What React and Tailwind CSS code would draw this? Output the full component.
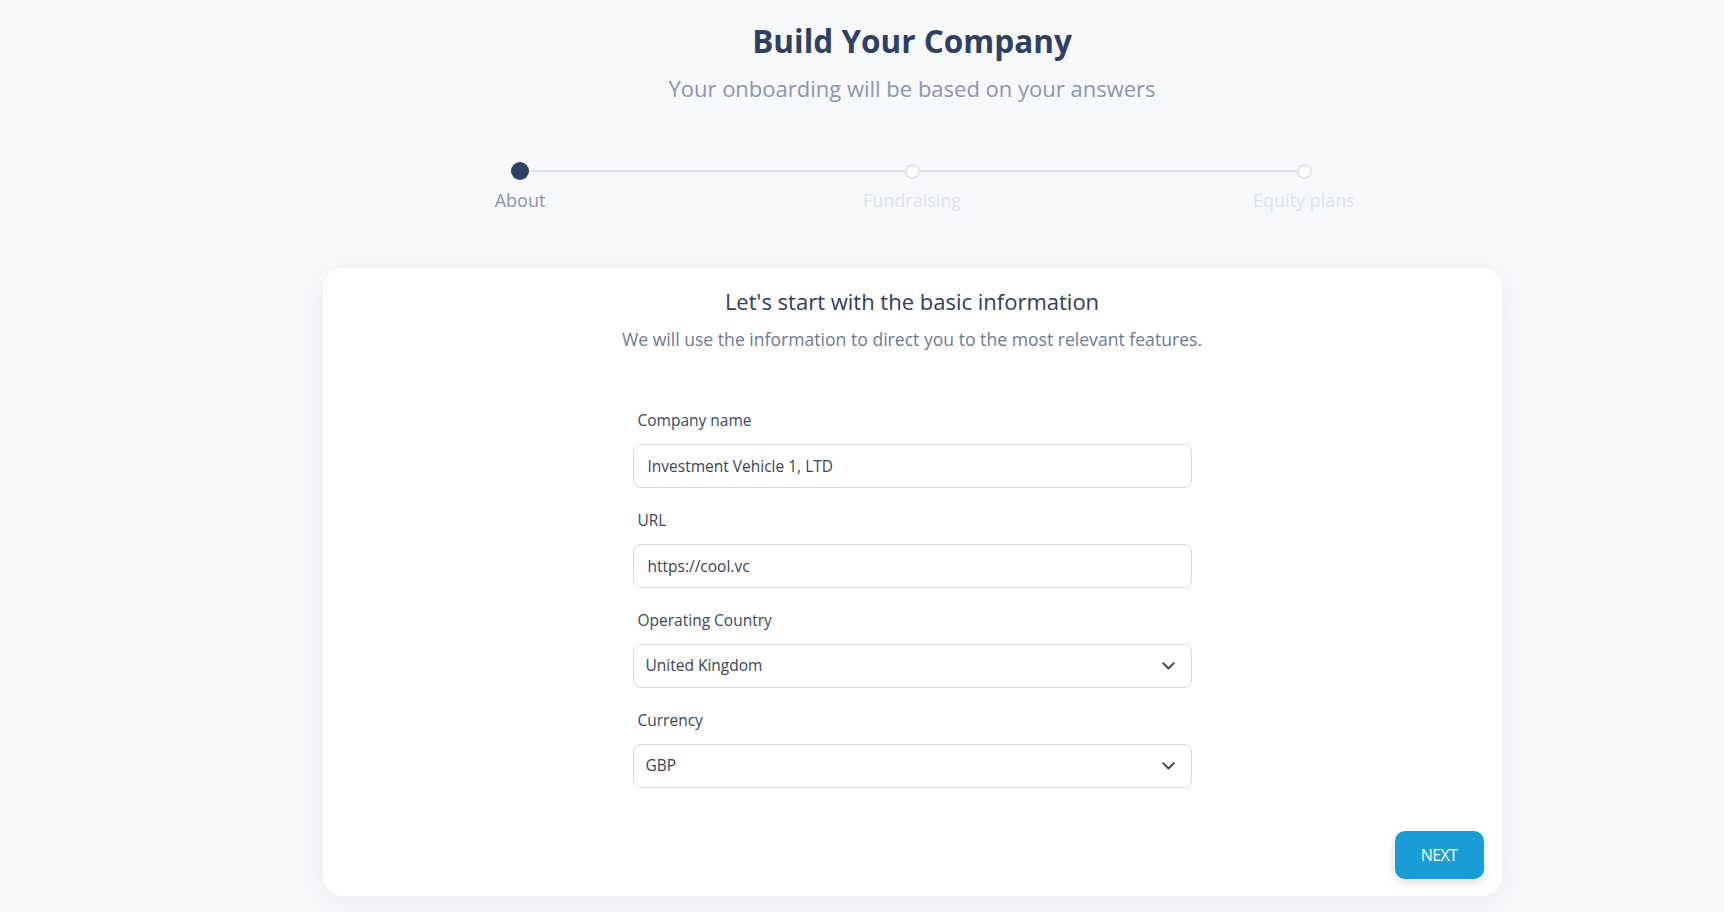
import React from "react";

const font = { fontFamily: '"Open Sans", "Noto Sans", sans-serif' };

function Step({ label, active, left, right }) {
  return (
    <div className="flex w-[392px] flex-col items-center">
      <div className="flex h-[18px] w-full items-center">
        <div className={"h-[2px] flex-1 " + (left ? "bg-[#e1e3e9]" : "bg-transparent")} />
        {active ? (
          <div className="h-[18px] w-[18px] rounded-full bg-[#2f4265]" />
        ) : (
          <div className="h-[15px] w-[15px] rounded-full border-2 border-[#e1e3e9] bg-white" />
        )}
        <div className={"h-[2px] flex-1 " + (right ? "bg-[#e1e3e9]" : "bg-transparent")} />
      </div>
      <div
        className={
          "mt-[6px] text-[18px] leading-[28px] " +
          (active ? "text-[#8796b1]" : "text-[#dfe3ea]")
        }
      >
        {label}
      </div>
    </div>
  );
}

function Chevron() {
  return (
    <svg width="13" height="8" viewBox="0 0 13 8" fill="none">
      <path d="M1.2 1.2l5.3 5.3 5.3-5.3" stroke="#3b3f4c" strokeWidth="1.8" strokeLinecap="round" strokeLinejoin="round" />
    </svg>
  );
}

function TextField({ label, value }) {
  return (
    <div className="flex flex-col">
      <div className="pl-[5px] text-[15.5px] leading-[24px] text-[#3a4862]">{label}</div>
      <input
        readOnly
        value={value}
        className="mt-3 h-[44px] w-full rounded-[8px] border border-[#d6d6dc] bg-white px-[14px] text-[15.5px] text-[#3b4356] outline-none"
        style={font}
      />
    </div>
  );
}

function SelectField({ label, value }) {
  return (
    <div className="flex flex-col">
      <div className="pl-[5px] text-[15.5px] leading-[24px] text-[#3a4862]">{label}</div>
      <div className="mt-3 flex h-[44px] w-full items-center justify-between rounded-[8px] border border-[#d6d6dc] bg-white pl-[12px] pr-[16px] text-[15.5px] text-[#3b4356]">
        <span>{value}</span>
        <Chevron />
      </div>
    </div>
  );
}

export default function App() {
  return (
    <div className="min-h-screen bg-[#f7f8fa]" style={font}>
      <div className="ml-[100px] flex flex-col items-center pt-[21px]">
        <h1 className="text-[31.5px] font-bold leading-[40px] text-[#2e4164]">Build Your Company</h1>
        <p className="mt-[11px] text-[22px] leading-[32px] text-[#8896b0]">
          Your onboarding will be based on your answers
        </p>

        <div className="mt-[58px] flex">
          <Step label="About" active right />
          <Step label="Fundraising" left right />
          <Step label="Equity plans" left />
        </div>

        <div className="mt-[54px] flex w-[1179px] flex-col rounded-[20px] bg-white pb-[17px] pr-[18px] pt-[17px] shadow-[0_6px_30px_rgba(30,40,70,0.05)]">
          <div className="flex flex-col items-center pl-[18px]">
            <h2 className="text-[22px] leading-[32px] text-[#2f3e5b]">Let's start with the basic information</h2>
            <p className="mt-[8px] text-[17.6px] leading-[28px] text-[#6c7a96]">
              We will use the information to direct you to the most relevant features.
            </p>
          </div>

          <div className="mx-auto mt-[55px] flex w-[559px] translate-x-[9px] flex-col gap-5">
            <TextField label="Company name" value="Investment Vehicle 1, LTD" />
            <TextField label="URL" value="https://cool.vc" />
            <SelectField label="Operating Country" value="United Kingdom" />
            <SelectField label="Currency" value="GBP" />
          </div>

          <div className="mt-[43px] flex justify-end">
            <button className="h-[48px] w-[89px] rounded-[10px] bg-[#189dd6] text-[16px] tracking-[-0.6px] text-white shadow-[0_3px_8px_rgba(0,0,0,0.15)]">
              NEXT
            </button>
          </div>
        </div>
      </div>
    </div>
  );
}
